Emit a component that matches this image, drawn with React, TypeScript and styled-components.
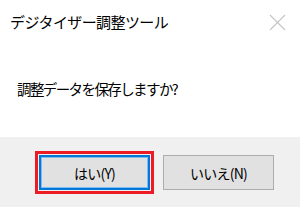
import React from "react";
import styled, { createGlobalStyle } from "styled-components";

const Global = createGlobalStyle`
  html, body { margin: 0; padding: 0; background: #ffffff; }
  body { font-family: "Noto Sans CJK JP", "Noto Sans", sans-serif; }
`;

const Dialog = styled.div`
  width: 300px;
  height: 207px;
  background: #ffffff;
  display: flex;
  flex-direction: column;
  overflow: hidden;
`;

const TitleBar = styled.div`
  height: 44px;
  display: flex;
  align-items: center;
  justify-content: space-between;
  padding: 0 14px 0 10px;
`;

const Title = styled.div`
  font-size: 15px;
  letter-spacing: -0.6px;
  color: #000000;
  line-height: 1;
  margin-top: -1px;
`;

const CloseIcon = styled.svg`
  width: 17px;
  height: 17px;
  display: block;
`;

const Body = styled.div`
  flex: 1;
  display: flex;
  align-items: center;
  padding: 0 0 3px 17px;
`;

const Message = styled.div`
  font-size: 14.5px;
  letter-spacing: -1.6px;
  color: #000000;
  line-height: 1;
`;

const Footer = styled.div`
  height: 70px;
  background: #f0f0f0;
  display: flex;
  justify-content: flex-end;
  align-items: flex-start;
  padding: 14px 26px 0 0;
  box-sizing: border-box;
  gap: 9px;
`;

const Highlight = styled.div`
  border: 3px solid #ed1c24;
  padding: 1px;
  display: flex;
`;

const Button = styled.button<{ $default?: boolean }>`
  width: 111px;
  height: 35px;
  margin: ${(p) => (p.$default ? "0" : "4px 0 0 0")};
  box-sizing: border-box;
  background: #e1e1e1;
  border: ${(p) => (p.$default ? "2px solid #0078d7" : "1px solid #adadad")};
  box-shadow: ${(p) => (p.$default ? "inset 0 0 0 1px #7fbdf0" : "none")};
  font-family: "Noto Sans CJK JP", "Noto Sans", sans-serif;
  font-size: 14px;
  letter-spacing: -0.8px;
  color: #000000;
  display: flex;
  align-items: center;
  justify-content: center;
  padding: 0;
  cursor: default;
`;

export default function App() {
  return (
    <>
      <Global />
      <Dialog>
        <TitleBar>
          <Title>デジタイザー調整ツール</Title>
          <CloseIcon viewBox="0 0 17 17">
            <path d="M1 1 L16 16 M16 1 L1 16" stroke="#c4c4c4" strokeWidth="1.1" fill="none" />
          </CloseIcon>
        </TitleBar>
        <Body>
          <Message>調整データを保存しますか?</Message>
        </Body>
        <Footer>
          <Highlight>
            <Button $default>はい(Y)</Button>
          </Highlight>
          <Button>いいえ(N)</Button>
        </Footer>
      </Dialog>
    </>
  );
}
